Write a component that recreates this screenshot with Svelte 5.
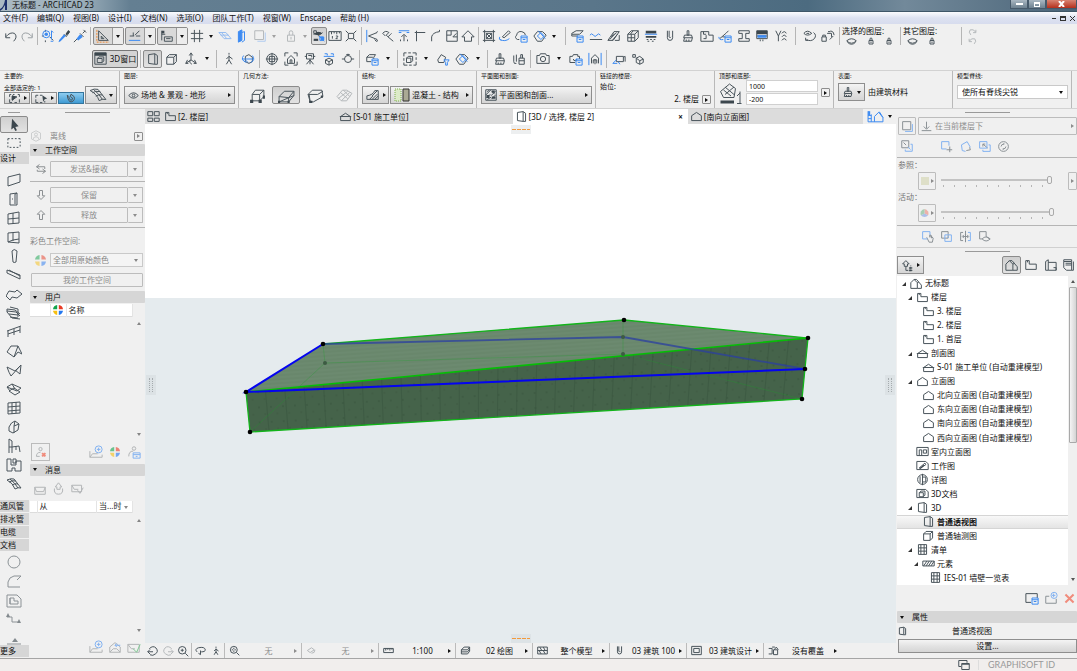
<script lang="ts">
  interface Glyph {
    k?: string; // dark strokes
    b?: string; // blue strokes
    f?: string; // dark fill
    bf?: string; // blue fill
    r?: string; // red strokes
    g?: string; // green strokes
    o?: string; // orange strokes
  }

  interface TreeRow {
    level: number;
    icon: string;
    label: string;
    open?: boolean;
    selected?: boolean;
  }

  // ── Icons, 16 × 16 grid ──────────────────────────────────────────────────────

  const HOUSE = 'M1 14V7l4-4 4 4v7zM5 3h3l6 7v4H9M9 7l2-1';
  const STORY = 'M2 3h4v4h8v6H2zM4 3v2';
  const SECTION = 'M2 8l6-4 6 4v5H2zM1 8h14';
  const ELEV = 'M2 13V7l6-4 6 4v6z';
  const PERSP = 'M3 3l7-1v12l-7-1zM10 2l3 2v10h-3';
  const AXO = 'M2 6h8v8H2zM2 6l3-3h8v8l-3 3M10 6l3-3';
  const MAIL = 'M2 6h12v8H2zM2 6l2 5h8l2-5';
  const BRUSH = 'M7 2h2v5H7zM4 7h8l1 3H3zM4 10l-1 4h9l1-4M6 12v2M9 12v2';
  const BLUEBOX = 'M8 8h7v7H8zM8 10h7M10 12h3';
  const GRID = 'M3 2h10v12H3zM6 2v12M10 2v12M3 6h10M3 10h10';
  const LOCK = 'M4 7h8v7H4zM6 7V4q0-2 2-2t2 2v3M8 9v3';

  const ICONS: Record<string, Glyph> = {
    undo: { k: 'M2 5v5h5M2 9q5-6 10-4 4 4-1 9' },
    redo: { k: 'M14 5v5H9M14 9Q9 3 4 5q-4 4 1 9' },
    find: { k: 'M1 8h2M5 1v2M5 13v2M10 9l4 4', b: 'M2 6a4 4 0 1 0 8 0 4 4 0 1 0-8 0M12 2v10M12 2l2 2M11 14h3', bf: 'M4 6a2 2 0 1 0 4 0 2 2 0 1 0-4 0' },
    dropper: { k: 'M8 6l3 3M10 7l3-4 1 1-3 4', b: 'M8 8l-6 6', f: 'M10 5l3-4 2 2-4 4z', bf: 'M8 6l2 2-6 6-2 1 1-3z' },
    syringe: { k: 'M5 11l-4 4M8 5l4 4M11 5l3-3M12 1l3 3', b: 'M10 7l-4 4', bf: 'M8 6l3 3-5 4-2-2z' },
    square: { k: 'M3 2v11h11zM6 8v3h3z', o: 'M1 1v14h14' },
    guide: { k: 'M2 8h5M8 7l5-5M9 8h5M6 4v4', b: 'M1 13h13' },
    snap: { k: 'M2 2v11M2 6h4M5 9h9v5H5zM7 11h5', f: 'M2 2h3v3H2z' },
    hash: { k: 'M5 1v14M11 1v14M1 5h14M1 11h14' },
    plane: { b: 'M1 4h8l6 7H7zM3 7h9M4 4l6 7' },
    wallblue: { b: 'M5 3l4-2v12l-4 2zM9 4l3-1v10l-3 2', bf: 'M5 3l4-2v12l-4 2z' },
    trace: { k: 'M2 2h10v10H2z', b: 'M5 14h9V4' },
    lock: { k: LOCK },
    group: { k: 'M2 2h3v3H2zM5 4h5M7 8l5-4M2 13h5M9 9l4 4', f: 'M1 6l6-3 5 2-5 2zM2 11h5v2H2z', b: 'M9 9h4v4H9zM8 8l6 6', bf: 'M10 9h4v4h-4z' },
    ruler: { k: 'M1 3h14v10H1zM4 3v3M7 3v2M10 3v3M13 3v2M5 8v3M9 8h2v1L9 11h2' },
    cross: { k: 'M5 5h6v6H5zM2 2l3 3M14 2l-3 3M2 14l3-3M14 14l-3-3' },
    trim: { k: 'M4 8l10-4M4 8l10 4M13 12q2 1 1 2t-3-2M13 4q2-2 1-1', b: 'M2 1v14' },
    wrench: { k: 'M2 5q3-4 7-1l-3 3 2 2 3-3 1-1M8 9l6 5M2 5l3 3' },
    adjust: { k: 'M8 14V7M5 9l3-3 3 3M4 14v-2M12 14v-2', b: 'M2 2h12M2 4h3M11 4h3' },
    corner: { k: 'M4 14V4h10M4 4V2M2 4h2' },
    fillet: { k: 'M3 14V9q1-5 9-6M12 3V1' },
    offset: { k: 'M2 2h12v12H2zM2 7h5V2M9 9h5M9 9l4-4' },
    home: { k: 'M1 9l7-7 7 7h-3v5H4V9z' },
    frame: { k: 'M3 1v14M13 1v14M1 3h14M1 13h14M5 5l6 6M11 5l-6 6M5 5h6v6H5z' },
    pencil: { k: 'M5 9l7-7 2 2-7 6z', b: 'M2 12q6 3 11-1M2 9q-2 3 2 4' },
    cloud: { k: 'M6 12H4q-4-2-1-5 1-5 6-4 4 1 4 4', b: BLUEBOX },
    morph: { k: 'M1 8l4-5h6l4 4-5 7H5z', b: 'M5 8l4-4 4 4-4 4zM6 2l8 9' },
    slab: { k: 'M2 5l5-3h8l-4 4H2zM2 8h7M2 6v2', b: BLUEBOX },
    waves: { k: 'M1 12h14', b: 'M1 7q2-3 4 0t4 0 4 0' },
    hatch: { k: 'M1 13h6l7-10H8zM3 12l8-8M6 13l6-7M5 9l3-4M9 13h5V7' },
    cubes: { k: 'M2 6l4-4h8v8l-4 4H2zM2 6h8v8M10 6l4-4M6 6v8M2 10h8M8 2L5 6' },
    layers: { f: 'M2 2h12v3H2zM2 8h12v2H2z', b: 'M1 6h14', k: 'M3 12h2M7 12h2M11 12h2M4 14h2M9 14h2' },
    hook: { k: 'M5 2v8q0 3 3 3t3-3V2M7 2v7q1 2 2 0' },
    brush: { k: BRUSH },
    plan: { k: 'M1 3h9v4h5v7H1zM4 3v3h3M7 7v4H4' },
    penbox: { k: 'M2 11l7-6 3-3M5 9h3', b: BLUEBOX + 'M1 9q0 4 5 3' },
    beam: { k: 'M2 2h12v3h-4v6h4v3H2v-3h4V5H2z' },
    table: { f: 'M2 2h12v4H2z', k: 'M2 2h12v9H2zM2 8h12M6 12v2M9 12v2', bf: 'M3 7h10v3H3z' },
    anchor: { k: 'M2 2l3 6 3-6M5 8v6M9 5q3-4 5 0M9 9q3-4 5 0M9 13q3-4 5 0' },
    eyecycle: { k: 'M1 5q4-5 9 0-5 4-9 0M4 5h3M4 12q5 3 9-1M12 4q4 3 1 7M3 10v3h3' },
    lockcycle: { k: 'M1 9h5v5H1zM2 9V7h3v2M7 5h5v4M10 12l4-4M11 2q4 1 4 5M8 3h3' },
    eye: { k: 'M1 8q7-8 14 0-7 8-14 0zM6 8a2 2 0 1 0 4 0 2 2 0 1 0-4 0' },
    lens: { k: 'M1 7q7-6 14 0-7 7-14 0M2 9q6 6 12 0' },
    box3d: { k: 'M1 1h14v14H1zM1 4h14M4 8h6v5H4zM4 8l2-2h6v5l-2 2', f: 'M1 1h14v3H1z' },
    persp: { k: PERSP },
    axo: { k: AXO },
    axes: { k: 'M8 2v7M8 9l-6 4M8 9l6 4M6 4l2-3 2 3M4 9l-2 4h3M12 9l2 4h-3M7 9q-2 3 2 5' },
    walk: { k: 'M8 1v2M8 4v5l3 5M8 9l-3 5M8 5L5 8M8 5l4 3' },
    orbit: { k: 'M5 5l4-2 4 3v5l-4 2-4-2z', b: 'M3 4q-4 5 3 8M8 12l-3-3M13 4q4 5-2 8M1 8h13' },
    target: { k: 'M2 8a6 6 0 1 0 12 0 6 6 0 1 0-12 0M1 8h14M8 1v14M5 5h6v6H5z' },
    fitview: { k: 'M1 5V1h4M11 1h4v4M1 11v4h4M11 15h4v-4M4 13V8l4-4 4 4v5zM7 13V9h2v4' },
    camera: { k: 'M4 2h8v6H4zM6 4h4v2M8 8v6M8 9l-4 5M8 9l4 5M2 5h2M12 5h2' },
    orbitbox: { k: 'M4 9l4-2 4 2v4l-4 2-4-2zM4 9l4 2 4-2M8 11v4', b: 'M2 5h12M3 2h3v2M10 2h3v2' },
    lookat: { k: 'M1 8h3M12 8h3M4 8a4 4 0 0 1 8 0M4 8a4 4 0 0 0 8 0M8 4v-2M6 3h4' },
    cut3d: { k: 'M2 6l3-3h7l-2 3v2M2 6v5h5M2 6h7', b: BLUEBOX },
    marquee3d: { k: 'M1 1h3M6 1h3M11 1h4v3M15 6v3M15 11v4h-3M10 15H7M5 15H1v-3M1 10V7M1 5V1M4 7h5v5H4zM4 7l2-2h5v5l-2 2' },
    filter3d: { k: 'M2 9l4-6 5 3-2 6H3z', b: 'M9 9h6l-2 3v3h-2v-3z' },
    brushes: { k: 'M8 7h6v7H8zM10 7V3h2v4M8 10h6M2 4v7M5 3v8M2 11q0 3 3 2' },
    photo: { k: 'M1 4h3l1-2h6l1 2h3v9H1zM5 8a3 3 0 1 0 6 0 3 3 0 1 0-6 0' },
    photoset: { k: 'M1 5h3l1-2h5v2h2v3M1 5v7h6M5 8a2 2 0 1 0 4 0', b: BLUEBOX },
    align: { k: 'M4 13V7l4-4 4 4v6M8 8v6M6 13V9h4v4', b: 'M1 1v14M15 1v14' },
    fly: { k: 'M5 5h8v6H5zM13 6l2-1v6', b: 'M1 13l4-4M1 13h5M7 11l2 3' },
    gems: { k: 'M2 3h3v3H2zM6 7l4-2 4 3v4l-4 2-4-2zM6 7l4 3 4-2M10 10v4' },
    // info box
    selrect: { k: 'M2 3h2M6 3h2M2 3v3M2 9v4h3M8 13h3M14 9v4M5 5v5l6-4zM12 3h2v3', f: 'M5 4l5 2-5 5z' },
    selarrow: { k: 'M1 4h3M6 4h3M1 4v3M1 9v4h3M6 13h3M12 11v2', f: 'M9 4l6 4-3 1-2 3z' },
    magnet: { k: 'M3 4q1 10 6 9 5-2 3-7l-4-3-1 3 3 2q0 3-2 3Q5 10 5 6z' },
    mesh: { k: 'M1 4q4-2 7-1l7 9q-3-1-6 1Q7 7 1 4M4 3q5 4 8 9M3 6q3-2 7-1M6 9q3-2 6-1' },
    geo1: { k: 'M3 7l3-4h8v6l-4 4H3zM3 7h7v6M10 7l4-4', f: 'M1 12h3v3H1zM9 12h3v3H9zM13 8h2v3h-2z' },
    geo2: { k: 'M1 9l5-5h9v4l-5 6H1zM1 9l9 1v4M10 10l5-6M1 14l14-6', f: 'M0 13h2v2H0zM9 13h2v2H9z' },
    geo3: { k: 'M1 7l4-4h9l1 6-9 5H3zM1 7h9l5-3M2 7l1 7', f: 'M2 13h3v2H2zM13 8h2v2h-2z' },
    geo4: { k: 'M1 9l5-6h4l5 3-5 7H5zM4 5l7 6M7 3l6 6M2 11l9-7M5 13l8-8' },
    wedge: { k: 'M1 13V9q7-1 9-6h4v10zM4 13l4-4M7 13l6-6M10 13l4-4M7 9l6-6' },
    textured: { k: 'M1 1h14v14H1zM3 4l3-3M1 8l7-7M9 3l4 4M8 9l6-6M2 12l5-5M9 13l5-5M3 14l5-3', f: 'M9 2h4v3H9zM2 8h4v4H2zM9 10h5v3H9z' },
    topbottom: { k: 'M1 7l6-5 4 3-1 6H3zM3 6l5 4M4 4l6 5M4 9l6-5M14 7v8M12 15h3M12 10l2-2', f: 'M1 13h9v2H1z' },
    // toolbox
    arrow: { f: 'M5 1l8 9-4 1 2 4-2 1-2-4-3 2z' },
    marquee: { k: 'M1 3h2M5 3h2M9 3h2M13 3h2v1M15 6v2M15 10v2M13 13h-2M9 13H7M5 13H3M1 13v-2M1 9V7M1 5V3' },
    wall: { k: 'M2 5l12-3v8L2 14z' },
    door: { k: 'M4 3l7-1v12H4zM6 8h1M11 2l-2 1v10' },
    window: { k: 'M2 4l11-2v11L2 14zM7 3v11M2 9l11-1' },
    cwindow: { k: 'M2 4l11-1v11L2 13zM7 4v8M7 11l6-1M2 13l5-2' },
    column: { k: 'M6 3q2-3 5 0l-1 11q-2 1-3 0z' },
    beamt: { k: 'M1 3l13 5v4L1 6zM3 3l11 6' },
    slabt: { k: 'M0 10l3-5 6 1 2-2 5 4-5 4-5-1-2 3z' },
    stair: { k: 'M1 4l8 1 5 4M1 6l9 1 4 4M3 9l9 1M4 12l8 1M1 4v3l5 6 8 1M4 2l8 2v8' },
    rail: { k: 'M1 7l14-5M2 7v6M8 5v6M14 3v6M2 10l12-4' },
    roof: { k: 'M1 9l4-6h7l4 8-4-2-4 5zM12 3L8 14' },
    shell: { k: 'M1 5q2 6 4 9l10-11-1 9-5-4M1 5l8 4 6-6' },
    skylight: { k: 'M1 6l5-3 9 4-4 3zM3 10l5-3 6 4-5 3zM1 6l3 4M6 3l3 5' },
    curtain: { k: 'M2 3l12-1v11L2 14zM6 3v11M10 2v11M2 7l12-1M2 11l12-1' },
    morpht: { k: 'M3 8q2-5 6-6l4 3-1 6-5 3-4-2zM9 2l-1 5v7M8 7l5-2' },
    chair: { k: 'M3 1l3 2v6H3zM3 9v6M6 9l7-1 1 6M6 9v6M10 8v4' },
    zone: { k: 'M1 2h4v6h5V4h5v10H9v-3H6v3H1zM7 2h3v4H7z' },
    circle: { k: 'M2 8a6 6 0 1 0 12 0 6 6 0 1 0-12 0' },
    polyline: { k: 'M2 14V9q1-5 6-6h7l-4 4M2 14h12' },
    drawing: { k: 'M1 3h10l4 4v8H1zM4 6h4v3h4v3H4zM4 6v6' },
    worksh: { k: 'M1 6h5v5h8', f: 'M0 6l2-4 2 4zM11 12l2-4 2 4z' },
    secline: { k: 'M1 14h14', f: 'M6 12l3-4 3 4z' },
    // palettes
    user: { k: 'M8 1L14 4v8l-6 3-6-3V4zM6 6a2 2 0 1 0 4 0 2 2 0 1 0-4 0M4 13q0-4 4-4t4 4' },
    swap: { k: 'M6 2L2 5l4 3M2 5h11v3M10 8l4 3-4 3M14 11H3V9' },
    down: { k: 'M6 2h4v7h3l-5 5-5-5h3z' },
    up: { k: 'M6 14h4V7h3L8 2 3 7h3z' },
    userx: { k: 'M6 5a2 2 0 1 0 4 0 2 2 0 1 0-4 0M3 14q0-5 5-5M3 14h4', r: 'M10 10l4 4M14 10l-4 4' },
    mailplus: { k: 'M1 7v7h14v-3M1 14l3-4h6', b: 'M7 5a4 4 0 1 0 8 0 4 4 0 1 0-8 0M11 3v4M9 5h4' },
    userbox: { k: 'M6 4a2 2 0 1 0 4 0 2 2 0 1 0-4 0M2 13q0-6 5-6', b: 'M7 9h8v6H7zM7 11h8M10 13h2' },
    mail: { k: MAIL },
    mailup: { k: 'M8 1L4 6h2v3h4V6h2zM3 8q-1 7 5 7t5-7' },
    mailok: { k: 'M1 4h12v8H1zM1 4l3 5h5M8 10l3 4 4-7' },
    mailopen: { k: 'M2 8l6-5 6 5v6H2zM2 14l4-4h4l4 4', b: 'M8 6h6M10 4L8 6l2 2' },
    mailcheck: { k: 'M1 5h13v9H1zM1 5l4 5h4', g: 'M7 10l4 4 4-9' },
    docs: { k: 'M2 2h10v10H2z', b: 'M5 14h9V5' },
    below: { k: 'M8 1v10M4 8l4 4 4-4M1 14h14' },
    switchref: { k: 'M2 2h8v8H2zM4 4l3 3', b: 'M6 12v2h8V6h-2M9 9l3 3' },
    moveref: { b: 'M8 11H2V2h9v5', k: 'M12 8v7M8 12h7' },
    rotref: { b: 'M3 6l7-4 4 7M3 6l1 7 4 1', k: 'M9 13l5-1-1-3' },
    offref: { b: 'M2 2h9v8H2zM6 12v2h9V6h-2', k: 'M6 5l6 5M6 5v3M6 5h3' },
    reset: { k: 'M2 8a6 6 0 1 0 12 0 6 6 0 1 0-12 0M5 8q0-3 4-3l-1-1M11 8q0 3-4 3l1 1' },
    hand: { b: 'M8 11H2V2h9v4', k: 'M7 9l3 6h4l1-5-2-2v2-3l-2-1v3-3' },
    overlap: { k: 'M2 2h8v8H2z', b: 'M6 6h8v8H6zM9 9h2' },
    split: { k: 'M5 3H2v10h3M8 1v14M5 8h6M6 6L4 8l2 2M10 6l2 2-2 2', b: 'M11 3h3v10h-3' },
    ghost: { k: 'M2 2h8v6M2 2v9h3M5 11q5-5 10 0-5 5-10 0M10 8l4 3' },
    chooser: { k: 'M2 6l4-4 4 4H8v3H4V6zM6 9v5h3M12 8v1M11 14h3M11 11h3', f: 'M10 10h3v2h-3zM10 13h3v2h-3z' },
    views: { k: 'M3 14V4l3-2v12zM6 5h9v9H6M12 11h3v3' },
    pubs: { k: 'M2 4V2h9v2M2 4h9v10H5l-3-3zM4 6h7M4 8h7M13 4v10h-2' },
    house: { k: HOUSE },
    story: { k: STORY },
    section: { k: SECTION },
    elev: { k: ELEV },
    interior: { k: 'M1 3h14v10H1zM4 13V6h3v7M9 6h4v4H9z' },
    worksheet: { k: 'M1 3h11l3 3v7H1zM4 11l7-6 1 2-6 4z', f: 'M4 12l5-5 1 1-4 4z' },
    detail: { k: 'M2 8a6 6 0 1 0 12 0 6 6 0 1 0-12 0M8 1v14M5 4v8M8 5h4v6H8' },
    doc3d: { k: 'M1 3h11l3 3v7H1zM4 7h5v5H4zM4 7l2-2h5v5l-2 2' },
    grid: { k: GRID },
    hatchbar: { k: 'M1 5h14v6H1zM2 11l4-6M5 11l4-6M8 11l4-6M11 11l4-6' },
    newview: { k: 'M7 13H1V3h13v5', b: BLUEBOX },
    addfolder: { k: 'M2 6v8h12V9M2 6h4', b: 'M8 5a3 3 0 1 0 7 0 3 3 0 1 0-7 0M11 3v4M9 5h4' },
    del: { r: 'M3 3l10 10M13 3L3 13' },
    fourgrid: { k: 'M1 2h6v5H1zM9 2h6v5H9zM1 10h6v4H1zM9 10h6v4H9z' },
    bluehouse: { b: 'M1 3v10h14V9l-4-5-4 4v5M1 7h3M1 10h3M4 6v7M11 4h1l3 5', bf: 'M1 3h2v4H1z' },
    zoomin: { k: 'M2 7a5 5 0 1 0 10 0 5 5 0 1 0-10 0M11 11l4 4M5 7h4M7 5v4' },
    zoomprev: { k: 'M3 5q5-5 9-1 4 5-1 8-3 3-7 1M1 9h7M4 6L1 9l3 3' },
    zoomnext: { k: 'M13 5q-5-5-9-1-4 5 1 8 3 3 7 1M15 9H8M12 6l3 3-3 3' },
    orbitq: { k: 'M3 10q-4-4 2-6 9-2 10 3 0 3-6 3M8 8v6M8 14l-3-2' },
    fit: { k: 'M2 7a5 5 0 1 0 10 0 5 5 0 1 0-10 0M11 11l4 4M7 4v2M7 8v2M4 7h2M8 7h2' },
    tilt: { k: 'M2 8l6-4 4 3-6 4zM8 12q5 0 5-5' },
    scale: { k: 'M1 5h14v6H1zM4 5v3M7 5v2M10 5v3M13 5v2' },
    stack: { k: 'M2 7l4-4h8l-3 4zM2 10h9l3-4M2 13h9l3-4M2 7v6M14 3v6' },
    model: { k: 'M1 3h14v10H1zM1 8h14M4 3l3 5M9 3l3 5M3 8l3 5M9 8l3 5' },
    rect2: { k: 'M1 2h14v12H1zM4 5h8v6H4z' },
    override: { k: 'M1 5h5v8H1M8 7h6v7H8zM9 7l3-4 3 4M6 3h4' },
    windows: { k: 'M1 2h11v3M1 2v8h3M5 6h10v8H5zM5 7h10' },
  };

  // ── Toolbars, "|" is a divider and "v" a drop-down arrow ────────────────────

  const row1a = ['undo', 'redo', '|', 'find', 'dropper', 'syringe', '|'];
  const row1b = ['hash', 'v', 'plane', 'wallblue'];
  const row1c = ['ruler', 'cross', '|', 'trim', 'wrench', 'adjust', 'corner', 'fillet', 'offset', 'home', '|', 'frame', 'pencil', 'cloud'];
  const row1d = ['slab', 'waves', 'hatch', 'cubes', 'layers', 'hook', 'brush', 'plan', 'penbox', 'beam', 'table', 'anchor'];
  const row2 = [
    'axo', 'axes', 'v', '|', 'walk', 'orbit', '|', 'target', 'fitview', 'camera', 'orbitbox', 'lookat', '|',
    'cut3d', 'v', '|', 'marquee3d', 'v', 'filter3d', 'morph', 'v', '|', 'brush', 'brushes', '|',
    'photo', 'v', 'photoset', 'align', '|', 'fly', 'gems',
  ];
  const paleTools = ['redo', 'plane'];

  const menus = ['文件(F)', '编辑(Q)', '视图(B)', '设计(I)', '文档(N)', '选项(O)', '团队工作(T)', '视窗(W)', 'Enscape', '帮助 (H)'];

  const designTools = [
    'wall', 'door', 'window', 'cwindow', 'column', 'beamt', 'slabt', 'stair', 'rail', 'roof', 'shell',
    'skylight', 'curtain', 'morpht', 'chair', 'zone', 'mesh',
  ];
  const toolGroups = ['通风管', '排水管', '电缆', '文档'];
  const docTools = ['circle', 'polyline', 'drawing', 'worksh', 'secline'];

  const tabs = [
    { icon: 'story', label: '[2. 楼层]' },
    { icon: 'section', label: '[S-01 施工单位]' },
    { icon: 'persp', label: '[3D / 选择, 楼层 2]', active: true },
    { icon: 'elev', label: '[南向立面图]' },
  ];

  const tree: TreeRow[] = [
    { level: 0, icon: 'house', label: '无标题', open: true },
    { level: 1, icon: 'story', label: '楼层', open: true },
    { level: 2, icon: 'story', label: '3. 楼层' },
    { level: 2, icon: 'story', label: '2. 楼层' },
    { level: 2, icon: 'story', label: '1. 首层' },
    { level: 1, icon: 'section', label: '剖面图', open: true },
    { level: 2, icon: 'section', label: 'S-01 施工单位 (自动重建模型)' },
    { level: 1, icon: 'elev', label: '立面图', open: true },
    { level: 2, icon: 'elev', label: '北向立面图 (自动重建模型)' },
    { level: 2, icon: 'elev', label: '东向立面图 (自动重建模型)' },
    { level: 2, icon: 'elev', label: '南向立面图 (自动重建模型)' },
    { level: 2, icon: 'elev', label: '西向立面图 (自动重建模型)' },
    { level: 1, icon: 'interior', label: '室内立面图' },
    { level: 1, icon: 'worksheet', label: '工作图' },
    { level: 1, icon: 'detail', label: '详图' },
    { level: 1, icon: 'doc3d', label: '3D文档' },
    { level: 1, icon: 'persp', label: '3D', open: true },
    { level: 2, icon: 'persp', label: '普通透视图', selected: true },
    { level: 2, icon: 'axo', label: '普通轴测图' },
    { level: 1, icon: 'grid', label: '清单', open: true },
    { level: 2, icon: 'hatchbar', label: '元素', open: true },
    { level: 3, icon: 'grid', label: 'IES-01 墙壁一览表' },
  ];

  const quick = [
    { icon: 'fit', label: '无', off: true },
    { icon: 'tilt', label: '无', off: true, dim: true },
    { icon: 'scale', label: '1:100' },
    { icon: 'stack', label: '02 绘图' },
    { icon: 'model', label: '整个模型' },
    { icon: 'hook', label: '03 建筑 100' },
    { icon: 'rect2', label: '03 建筑设计' },
    { icon: 'override', label: '没有覆盖' },
  ];

  // ── Model view ───────────────────────────────────────────────────────────────

  const seams = Array.from({ length: 28 }, (_, i) => {
    const t = (i + 1) / 29;
    return { x1: 101 + 562 * t, y1: 268 - 54 * t, x2: 105 + 552 * t, y2: 308 - 33 * t };
  });
  const nodes = [[101, 268], [178, 220], [479, 196], [663, 214], [660, 245], [657, 275], [105, 308]];
  const hidden = [[180, 239], [478, 213], [478, 230]];

  let topLevel = $state('1000');
  let bottomLevel = $state('-200');
  let reference = $state(100);
  let active = $state(100);
</script>

{#snippet icon(name: string, size = 14)}
  {@const g = ICONS[name]}
  <svg class="icon" width={size} height={size} viewBox="0 0 16 16" aria-hidden="true">
    {#if g.k}<path class="ink" d={g.k} />{/if}
    {#if g.f}<path class="solid" d={g.f} />{/if}
    {#if g.b}<path class="blue" d={g.b} />{/if}
    {#if g.bf}<path class="blue-solid" d={g.bf} />{/if}
    {#if g.r}<path class="red" d={g.r} />{/if}
    {#if g.g}<path class="green" d={g.g} />{/if}
    {#if g.o}<path class="orange" d={g.o} />{/if}
  </svg>
{/snippet}

{#snippet wheel(size = 11)}
  <svg class="icon" width={size} height={size} viewBox="0 0 12 12" aria-hidden="true">
    <path fill="#12a44c" d="M5 5H0a6 6 0 0 1 5-5z" />
    <path fill="#e83a24" d="M7 5h5a6 6 0 0 0-5-5z" />
    <path fill="#f6bf12" d="M5 7H0a6 6 0 0 0 5 5z" />
    <path fill="#2478f0" d="M7 7h5a6 6 0 0 1-5 5z" />
  </svg>
{/snippet}

{#snippet tools(items: string[])}
  {#each items as item}
    {#if item === '|'}
      <span class="divider"></span>
    {:else if item === 'v'}
      <button class="drop" aria-label="更多"><i class="tri"></i></button>
    {:else}
      <button class="tool" class:pale={paleTools.includes(item)} aria-label={item}>{@render icon(item)}</button>
    {/if}
  {/each}
{/snippet}

{#snippet combo(name: string)}
  <div class="combo">
    <button class="combo-main" aria-label={name}>{@render icon(name)}</button>
    <button class="combo-drop" aria-label="更多"><i class="tri"></i></button>
  </div>
{/snippet}

{#snippet scroller()}
  <div class="scroller"><i class="tri tri--up"></i><i class="tri"></i></div>
{/snippet}

<div class="app">
  <header class="titlebar">
    <svg class="logo" width="9" height="12" viewBox="0 0 9 12" aria-hidden="true">
      <path d="M0 9Q4 7 5 0h2v10H5V5Q3 9 0 11z" fill="#1c2f6c" />
    </svg>
    <span class="title">无标题 - ARCHICAD 23</span>
    <div class="winbtns">
      <button aria-label="最小化"><i class="min"></i></button>
      <button aria-label="还原"><i class="max"></i></button>
      <button class="close" aria-label="关闭">
        <svg width="7" height="6" viewBox="0 0 7 6" aria-hidden="true"><path d="M1 0l5 6M6 0L1 6" stroke="#fff" stroke-width="2" /></svg>
      </button>
    </div>
  </header>

  <nav class="menubar">
    {#each menus as m}<button>{m}</button>{/each}
    <div class="docbtns">
      <button aria-label="最小化文档"><i class="min"></i></button>
      <button aria-label="还原文档"><i class="max"></i></button>
      <button aria-label="关闭文档">
        <svg width="5" height="5" viewBox="0 0 5 5" aria-hidden="true"><path d="M0 0l5 5M5 0L0 5" stroke="#333" /></svg>
      </button>
    </div>
  </nav>

  <div class="toolbars">
    <div class="bar bar--top">
      {@render tools(row1a)}
      {@render combo('square')}
      {@render combo('guide')}
      {@render combo('snap')}
      {@render tools(row1b)}
      <div class="set faded">{@render tools(['trace', 'v'])}</div>
      <div class="set faded">{@render tools(['lock', 'v'])}</div>
      <button class="tool pressed" aria-label="group">{@render icon('group')}</button>
      {@render tools(row1c)}
      <div class="set">{@render tools(['morph', 'v'])}</div>
      <div class="set">{@render tools(['|'])}</div>
      <div class="spread">{@render tools(row1d)}</div>
      <div class="set">{@render tools(['|'])}</div>
      <div class="set wide">{@render tools(['eyecycle', 'lockcycle', '|'])}</div>
      <div class="layerset">
        <span>选择的图层:</span>
        <div>
          <button aria-label="显示">{@render icon('lens', 11)}</button>
          <button aria-label="锁定">{@render icon('lock', 8)}</button>
          <button aria-label="解锁">{@render icon('lock', 8)}</button>
        </div>
      </div>
      <span class="divider"></span>
      <div class="layerset">
        <span>其它图层:</span>
        <div>
          <button aria-label="显示其它">{@render icon('lens', 11)}</button>
          <button aria-label="锁定其它">{@render icon('lock', 8)}</button>
        </div>
      </div>
      <span class="divider"></span>
      <div class="redoset faded">
        <button aria-label="重做图层">{@render icon('redo', 9)}</button>
        <button aria-label="撤销图层">{@render icon('undo', 9)}</button>
      </div>
    </div>

    <div class="bar bar--view">
      <button class="window3d">{@render icon('box3d', 13)}3D窗口</button>
      <span class="divider"></span>
      <button class="tool pressed" aria-label="persp">{@render icon('persp')}</button>
      {@render tools(row2)}
    </div>
  </div>

  <div class="infobox">
    <section>
      <h2>主要的:</h2>
      <div class="body">
        <div class="stacked">
          <span class="tiny">全部选定的: 1</span>
          <div class="body">
            <button class="btn btn--low" aria-label="选择">{@render icon('selrect', 13)}<i class="tri tri--right"></i></button>
            <button class="btn btn--low" aria-label="选框">{@render icon('selarrow', 13)}<i class="tri tri--right"></i></button>
            <button class="btn btn--low btn--on" aria-label="吸引">{@render icon('magnet', 12)}</button>
          </div>
        </div>
        <button class="btn grow" aria-label="网面">{@render icon('mesh', 18)}<i class="tri"></i></button>
      </div>
    </section>
    <section>
      <h2>图层:</h2>
      <div class="body">
        <button class="btn grow">{@render icon('eye', 11)}<span class="fill">场地 & 景观 - 地形</span><i class="tri tri--right"></i></button>
      </div>
    </section>
    <section>
      <h2>几何方法:</h2>
      <div class="body">
        <button class="geo" aria-label="方法一">{@render icon('geo1', 17)}</button>
        <button class="geo pressed" aria-label="方法二">{@render icon('geo2', 17)}</button>
        <button class="geo" aria-label="方法三">{@render icon('geo3', 17)}</button>
        <button class="geo faded" aria-label="方法四">{@render icon('geo4', 17)}</button>
      </div>
    </section>
    <section>
      <h2>结构:</h2>
      <div class="body">
        <button class="btn btn--sq" aria-label="结构类型">{@render icon('wedge')}<i class="tri tri--right"></i></button>
        <button class="btn grow">
          <svg class="icon" width="16" height="14" viewBox="0 0 16 14" aria-hidden="true">
            <path fill="#dcebc8" stroke="#7fb04a" stroke-dasharray="1 1" d="M1 1h6v12H1z" />
            <path fill="#aaa994" stroke="#333" d="M9 1h6v12H9z" />
          </svg>
          <span class="fill">混凝土 - 结构</span><i class="tri tri--right"></i>
        </button>
      </div>
    </section>
    <section>
      <h2>平面图和剖面:</h2>
      <div class="body">
        <button class="btn grow">{@render icon('textured', 12)}<span class="fill">平面图和剖面...</span><i class="tri tri--right"></i></button>
      </div>
    </section>
    <section>
      <h2>链接的楼层:</h2>
      <span class="small">始位:</span>
      <div class="body body--end">2. 楼层<button class="mini" aria-label="楼层"><i class="tri tri--right"></i></button></div>
    </section>
    <section>
      <h2>顶部和底部:</h2>
      <div class="body body--mid">
        {@render icon('topbottom', 24)}
        <div class="levels">
          <input aria-label="顶部" bind:value={topLevel} />
          <input aria-label="底部" bind:value={bottomLevel} />
        </div>
        <button class="mini" aria-label="标高"><i class="tri tri--right"></i></button>
      </div>
    </section>
    <section>
      <h2>表面:</h2>
      <div class="body body--mid">
        <button class="btn btn--sq" aria-label="表面">{@render icon('brush', 12)}<i class="tri"></i></button>
        <span>由建筑材料</span>
      </div>
    </section>
    <section>
      <h2>模型脊线:</h2>
      <div class="body body--mid">
        <div class="select grow">
          <select aria-label="模型脊线"><option>使所有脊线尖锐</option></select>
          <i class="tri"></i>
        </div>
      </div>
    </section>
  </div>

  <main class="work">
    <aside class="toolbox">
      <i class="handle handle--short"></i>
      <button class="tb pressed" aria-label="箭头">{@render icon('arrow', 13)}</button>
      <button class="tb" aria-label="选取框">{@render icon('marquee')}</button>
      <h3>设计</h3>
      <div class="designs">
        {#each designTools as t}<button class="tb" aria-label={t}>{@render icon(t, 16)}</button>{/each}
      </div>
      {#each toolGroups as g}<h3>{g}</h3>{/each}
      <div class="docs">
        {#each docTools as t}<button class="tb" aria-label={t}>{@render icon(t, 16)}</button>{/each}
      </div>
      <h3>更多</h3>
    </aside>

    <aside class="team">
      <i class="handle"></i>
      <div class="offline"><span class="faded">{@render icon('user', 12)}</span>离线<button class="mini" aria-label="选项"><i class="tri tri--right"></i></button></div>
      <h4><i class="tri"></i>工作空间</h4>
      <div class="rows">
        <div class="row"><span>{@render icon('swap', 12)}</span><button class="flat">发送&接收</button><button class="flat flat--drop" aria-label="发送选项"><i class="tri"></i></button></div>
      </div>
      <div class="rows">
        <div class="row"><span>{@render icon('down', 12)}</span><button class="flat">保留</button><button class="flat flat--drop" aria-label="保留选项"><i class="tri"></i></button></div>
        <div class="row"><span>{@render icon('up', 12)}</span><button class="flat">释放</button><button class="flat flat--drop" aria-label="释放选项"><i class="tri"></i></button></div>
      </div>
      <label class="cap" for="ws-color">彩色工作空间:</label>
      <div class="row row--color">
        <span class="pale">{@render wheel()}</span>
        <div class="select grow">
          <select id="ws-color" disabled><option>全部用原始颜色</option></select>
          <i class="tri"></i>
        </div>
      </div>
      <button class="flat flat--own">我的工作空间</button>
      <h4><i class="tri"></i>用户</h4>
      <div class="listing">
        <table>
          <thead><tr><th class="c20"></th><th class="c16">{@render wheel(10)}</th><th>名称</th></tr></thead>
        </table>
        {@render scroller()}
      </div>
      <div class="acts">
        <button class="boxed" aria-label="移除用户">{@render icon('userx', 13)}</button>
        <span class="fill"></span>
        <button aria-label="新消息">{@render icon('mailplus')}</button>
        <button aria-label="颜色">{@render wheel(10)}</button>
        <button aria-label="用户详情">{@render icon('userbox')}</button>
      </div>
      <h4><i class="tri"></i>消息</h4>
      <div class="acts acts--left">
        <button aria-label="消息">{@render icon('mail')}</button>
        <button aria-label="发送">{@render icon('mailup', 13)}</button>
        <button aria-label="已完成">{@render icon('mailok', 13)}</button>
      </div>
      <div class="listing">
        <table>
          <thead><tr><th class="c8"></th><th>从</th><th class="c36">当...时 <i class="tri"></i></th></tr></thead>
        </table>
        {@render scroller()}
      </div>
      <div class="acts acts--foot">
        <span class="fill"></span>
        <button aria-label="新建">{@render icon('mailplus')}</button>
        <button aria-label="回复">{@render icon('mailopen')}</button>
        <button aria-label="完成">{@render icon('mailcheck')}</button>
      </div>
    </aside>

    <div class="center">
      <div class="tabs">
        <button class="tabgrid" aria-label="标签总览">{@render icon('fourgrid', 13)}</button>
        {#each tabs as t}
          <button class="tab" class:tab--active={t.active}>
            {@render icon(t.icon, 13)}<span class="fill">{t.label}</span>
            {#if t.active}<b>×</b>{/if}
          </button>
        {/each}
        <button class="tabmore" aria-label="视图">{@render icon('bluehouse', 17)}<i class="tri"></i></button>
      </div>

      <div class="viewport">
        <svg class="model" viewBox="0 0 751 519" preserveAspectRatio="xMidYMin slice" aria-label="3D">
          <defs>
            <pattern id="soil" width="12" height="15" patternUnits="userSpaceOnUse" patternTransform="rotate(-3)">
              <circle cx="3" cy="4" r="0.7" fill="#33503a" />
              <circle cx="9" cy="11" r="0.7" fill="#3b5540" />
            </pattern>
            <pattern id="turf" width="40" height="4" patternUnits="userSpaceOnUse" patternTransform="rotate(-4)">
              <path d="M0 2h40" stroke="#769279" stroke-width="1" />
            </pattern>
          </defs>
          <rect width="751" height="174" fill="#fff" />
          <path d="M101 268L663 214 657 275 105 308z" fill="#45634a" />
          <path d="M101 268L663 214 657 275 105 308z" fill="url(#soil)" />
          {#each seams as s}
            <line x1={s.x1} y1={s.y1} x2={s.x2} y2={s.y2} stroke="#3b5741" opacity="0.6" />
          {/each}
          <path d="M101 268L178 220 479 196 663 214z" fill="#69876c" />
          <path d="M101 268L178 220 479 196 663 214z" fill="url(#turf)" opacity="0.5" />
          <path d="M105 308L180 239 478 230 657 275M180 239l-2-19M478 230V196" fill="none" stroke="#1d9e2a" opacity="0.3" />
          <path d="M178 220L479 196 663 214 657 275 105 308 101 268" fill="none" stroke="#12b41a" stroke-width="1.3" />
          <path d="M101 268L663 214" stroke="#06bd06" stroke-width="1.6" />
          <path d="M178 220L478 213 660 245" fill="none" stroke="#2b3fa0" stroke-width="1.8" opacity="0.75" />
          <path d="M178 220L101 268 660 245" fill="none" stroke="#0404f0" stroke-width="2" />
          {#each hidden as [x, y]}<circle cx={x} cy={y} r="2" fill="#3d5a43" />{/each}
          {#each nodes as [x, y]}<circle cx={x} cy={y} r="2.3" fill="#000" />{/each}
        </svg>
        <i class="dash dash--top"></i>
        <i class="dash dash--bottom"></i>
        <i class="grip grip--left"></i>
        <i class="grip grip--right"></i>
      </div>

      <div class="quick">
        <div class="zooms">
          <button aria-label="上一个">{@render icon('zoomprev', 12)}</button>
          <button class="faded" aria-label="下一个">{@render icon('zoomnext', 12)}</button>
          <button aria-label="放大">{@render icon('zoomin', 12)}</button>
        </div>
        <div class="zooms zooms--nav">
          <button aria-label="环绕">{@render icon('orbitq', 11)}</button>
          <button aria-label="漫游">{@render icon('walk', 10)}</button>
        </div>
        {#each quick as q}
          <button class="qcell" class:off={q.off}>
            <span class:faded={q.dim}>{@render icon(q.icon, 11)}</span><span class="fill">{q.label}</span><i class="tri tri--right"></i>
          </button>
        {/each}
      </div>
    </div>

    <aside class="side">
      <i class="handle"></i>
      <div class="traceref">
        <button class="flat flat--icon" aria-label="描绘">{@render icon('docs', 13)}</button>
        <button class="flat flat--wide">{@render icon('below', 11)}<span class="fill">在当前楼层下</span><i class="tri tri--right"></i></button>
      </div>
      <div class="refs">
        <button aria-label="切换">{@render icon('switchref')}</button>
        <span></span>
        {#each ['moveref', 'rotref', 'offref', 'reset'] as r}<button aria-label={r}>{@render icon(r, 13)}</button>{/each}
      </div>
      <div class="sliders">
        <label for="ref-range">参照：</label>
        <div class="slide">
          <button class="flat" aria-label="参照颜色"><i class="swatch"></i><i class="tri tri--right"></i></button>
          <div class="track"><input id="ref-range" type="range" bind:value={reference} /><i class="ticks"></i></div>
          <button class="flat flat--cut" aria-label="更多参照"><i class="tri tri--right"></i></button>
        </div>
        <label for="act-range">活动：</label>
        <div class="slide">
          <button class="flat" aria-label="活动颜色">
            <svg class="icon" width="9" height="9" viewBox="0 0 10 10" aria-hidden="true">
              <path fill="#ec8a7c" d="M5 5V0a5 5 0 0 1 4 7z" /><path fill="#7f9fe6" d="M5 5l4 2a5 5 0 0 1-8 0z" /><path fill="#79b98d" d="M5 5L1 7a5 5 0 0 1 4-7z" />
            </svg>
            <i class="tri tri--right"></i>
          </button>
          <div class="track"><input id="act-range" type="range" bind:value={active} /><i class="ticks"></i></div>
        </div>
      </div>
      <div class="refs refs--low">
        <span></span>
        {#each ['hand', 'overlap', 'split', 'ghost'] as r}<button aria-label={r}>{@render icon(r, 13)}</button>{/each}
      </div>
      <i class="handle"></i>
      <div class="navtop">
        <button class="btn btn--sq" aria-label="项目选择">{@render icon('chooser', 13)}<i class="tri tri--right"></i></button>
        <span class="fill"></span>
        <button class="nav pressed" aria-label="项目树">{@render icon('house')}</button>
        <button class="nav" aria-label="视图映射">{@render icon('story')}</button>
        <button class="nav" aria-label="图册">{@render icon('views')}</button>
        <button class="nav" aria-label="发布器">{@render icon('pubs')}</button>
      </div>
      <div class="navigator">
        <ul>
          {#each tree as row}
            <li class="lv{row.level}" class:selected={row.selected}>
              <i class="caret" class:caret--open={row.open}></i>
              {@render icon(row.icon, 13)}<a href="#{row.icon}">{row.label}</a>
            </li>
          {/each}
        </ul>
        <div class="bigscroll"><i class="tri tri--up"></i><span class="thumb"></span><i class="tri"></i></div>
      </div>
      <div class="acts acts--nav">
        <span class="fill"></span>
        <button class="vivid" aria-label="新建视图">{@render icon('newview')}</button>
        <button aria-label="新建文件夹">{@render icon('addfolder')}</button>
        <button aria-label="删除">{@render icon('del', 13)}</button>
      </div>
      <h4><i class="tri"></i>属性</h4>
      <div class="prop">{@render icon('persp', 10)}<span>普通透视图</span></div>
      <button class="btn settings">设置...</button>
    </aside>
  </main>

  <footer class="status">
    {@render icon('windows', 12)}<span>GRAPHISOFT ID</span>
  </footer>
</div>

<style>
  :global(body) {
    margin: 0;
    overflow: hidden;
  }

  .app {
    height: 100vh;
    display: flex;
    flex-direction: column;
    overflow: hidden;
    background: #f0f0f0;
    color: #111;
    font: 8px/10px "Noto Sans", "Noto Sans CJK SC", sans-serif;
  }

  .app *,
  .app *::before {
    box-sizing: border-box;
  }

  button,
  input,
  select {
    font: inherit;
    color: inherit;
    margin: 0;
    padding: 0;
    border: 0;
    background: none;
    white-space: nowrap;
  }

  button {
    display: flex;
    align-items: center;
    justify-content: center;
    flex-shrink: 0;
  }

  h2, h3, h4, ul {
    margin: 0;
    padding: 0;
    font-size: 8px;
    font-weight: 400;
    list-style: none;
  }

  .icon { display: block; flex-shrink: 0; }
  .icon path { stroke-width: 1; vector-effect: non-scaling-stroke; }
  .ink, .blue, .red, .green, .orange { fill: none; }
  .ink { stroke: #4a555c; }
  .solid { fill: #3c474e; }
  .blue { stroke: #3d8bf2; }
  .blue-solid { fill: #3d8bf2; }
  .icon .red { stroke: #f04a30; stroke-width: 2; }
  .green { stroke: #35b055; }
  .orange { stroke: #ef8a35; stroke-dasharray: 2 1; }

  .faded { opacity: 0.35; }
  .pale { opacity: 0.5; }
  .fill { flex: 1; min-width: 0; }
  .grow { flex: 1; }

  .tri {
    display: block;
    flex-shrink: 0;
    width: 0;
    border: 2px solid transparent;
    border-top: 3px solid currentColor;
    border-bottom-width: 0;
  }

  .tri--up {
    border-top-width: 0;
    border-bottom: 3px solid currentColor;
  }

  .tri--right {
    border: 2px solid transparent;
    border-left: 3px solid currentColor;
    border-right-width: 0;
  }

  .pressed {
    background: linear-gradient(#cfcfcf, #e2e2e2);
    border: 1px solid #8b8b8b;
    border-radius: 2px;
  }

  /* window chrome */

  .titlebar {
    display: flex;
    height: 12px;
    background: linear-gradient(90deg, #aab9c3 0, #9db0bc 80px, #647f92 130px, #5a768a 55%, #4c6b80 75%, #72899a 84%, #4a6478 100%);
    border-bottom: 1px solid #3f5768;
  }

  .title {
    flex: 1;
    padding-left: 3px;
    white-space: nowrap;
  }

  .winbtns { display: flex; height: 9px; }

  .winbtns button {
    width: 18px;
    background: linear-gradient(#a9b7c2, #6d8190);
    border: 1px solid #46596a;
    border-top: 0;
    color: #fff;
  }

  .winbtns .close { width: 31px; background: linear-gradient(#d98472, #b5301c); }

  .min { width: 7px; height: 2px; background: currentColor; }
  .max { width: 6px; height: 5px; border: 1px solid currentColor; border-top-width: 2px; }

  .menubar {
    display: flex;
    align-items: center;
    height: 12px;
    padding-left: 3px;
    gap: 9px;
    background: linear-gradient(#fbfcfe, #dde2f1 50%, #d7dcee);
  }

  .docbtns { display: flex; gap: 4px; margin-left: auto; padding-right: 2px; color: #333; }
  .docbtns .min { width: 4px; height: 1px; }

  /* toolbars */

  .toolbars { padding-bottom: 1px; }
  .bar { display: flex; align-items: center; }
  .bar--top { height: 24px; padding-left: 3px; }
  .bar--view { height: 21px; padding-left: 92px; }
  .bar .tool { width: 16px; height: 18px; }
  .bar--view .tool { width: 19px; }
  .wide .tool { width: 18px; }

  .divider {
    flex: 0 0 1px;
    height: 18px;
    margin: 0 2px;
    background: #b5b5b5;
  }

  .drop { width: 12px; height: 18px; }
  .bar--view .drop { width: 14px; }
  .set { display: flex; align-items: center; padding-left: 3px; }
  .spread { display: flex; justify-content: space-around; width: 222px; }

  .combo {
    display: flex;
    width: 31px;
    height: 18px;
    margin-right: 1px;
    border: 1px solid #8b8b8b;
    border-radius: 2px;
    background: #d9d9d9;
  }

  .combo-main { flex: 1; border-right: 1px solid #9a9a9a; }
  .combo-drop { width: 10px; background: #ececec; }

  .layerset { width: 56px; white-space: nowrap; }
  .layerset div { display: flex; gap: 10px; padding-left: 4px; }
  .redoset { padding-left: 4px; }

  .window3d {
    gap: 3px;
    width: 46px;
    height: 18px;
    border: 1px solid #777;
    border-radius: 2px;
    background: #d4d4d4;
  }

  /* info box */

  .infobox {
    display: grid;
    grid-template-columns: 120px repeat(8, 119px);
    height: 39px;
    overflow: hidden;
    border-top: 1px solid #d2d2d2;
    border-bottom: 1px solid #d2d2d2;
  }

  .infobox section {
    display: flex;
    flex-direction: column;
    min-width: 0;
    padding: 1px 3px 4px 4px;
    border-right: 1px solid #b9b9b9;
    overflow: hidden;
  }

  .infobox h2, .tiny { font-size: 6px; line-height: 8px; white-space: nowrap; }
  .small { font-size: 7px; line-height: 14px; }
  .body { display: flex; align-items: flex-end; gap: 1px; flex: 1; }
  .body--end { justify-content: flex-end; gap: 3px; }
  .body--mid { align-items: center; gap: 3px; }
  .stacked { display: flex; flex-direction: column; }

  .btn {
    gap: 2px;
    height: 18px;
    padding: 0 3px;
    border: 1px solid #8e8e8e;
    background: linear-gradient(#f4f4f4, #e3e3e3 50%, #d5d5d5);
    text-align: left;
  }

  .btn--sq { width: 27px; gap: 3px; }
  .btn--low { width: 26px; height: 12px; gap: 3px; }
  .btn--on { background: linear-gradient(#8ecdf0, #3e9ad3); border-color: #33759e; }
  .infobox .btn.grow { flex-shrink: 1; }
  .geo { width: 28px; height: 18px; }

  .mini {
    width: 9px;
    height: 9px;
    border: 1px solid #8e8e8e;
    border-radius: 1px;
  }

  .levels { display: flex; flex-direction: column; gap: 1px; flex: 1; min-width: 0; }
  .levels input { width: 100%; height: 12px; padding-left: 2px; background: #fff; border: 1px solid #d0d0d0; font-size: 7px; }

  .select {
    display: flex;
    align-items: center;
    height: 14px;
    padding: 0 4px;
    background: #fff;
    border: 1px solid #c9c9c9;
  }

  .select select { flex: 1; min-width: 0; appearance: none; opacity: 1; }

  /* work area */

  .work { display: flex; flex: 1; min-height: 0; border-bottom: 1px solid #a5a5a5; }

  .handle {
    flex: 0 0 1px;
    width: 45px;
    margin: 3px auto;
    background: #9a9a9a;
  }

  .handle--short { width: 12px; margin-left: 8px; }

  .toolbox { display: flex; flex-direction: column; width: 29px; }
  .toolbox h3 { flex-shrink: 0; height: 12px; margin-bottom: 1px; line-height: 12px; background: #d6d6d6; white-space: nowrap; overflow: hidden; }
  .tb { width: 28px; height: 19px; }
  .tb.pressed { height: 17px; }
  .designs { display: flex; flex-direction: column; padding: 5px 0 7px; }
  .docs { flex: 1; min-height: 0; overflow: hidden; opacity: 0.6; }

  .team { display: flex; flex-direction: column; width: 116px; padding-left: 1px; color: #858585; }
  .team .ink { stroke: #8c9093; }

  .team h4, .side h4 {
    display: flex;
    align-items: center;
    gap: 8px;
    height: 12px;
    padding-left: 3px;
    background: #d6d6d6;
    border-radius: 1px;
    color: #111;
  }

  .offline { display: flex; align-items: center; gap: 8px; height: 16px; margin-top: 12px; }
  .offline .mini { margin-left: auto; margin-right: 2px; }
  .rows { padding: 5px 2px 4px 0; border-bottom: 1px solid #b5b5b5; display: flex; flex-direction: column; gap: 4px; }
  .row { display: flex; align-items: center; }
  .row > span { width: 20px; padding-left: 5px; flex-shrink: 0; }

  .flat {
    height: 16px;
    border: 1px solid #bcbcbc;
    border-radius: 1px;
    color: #8d8d8d;
  }

  .row .flat { flex: 1; }
  .row .flat--drop { flex: 0 0 15px; border-left-width: 0; }
  .cap { padding: 8px 0 7px; }
  .row--color { margin-right: 2px; }
  .row--color .select { min-width: 0; background: #f4f4f4; padding-left: 2px; }
  .row--color select { width: 100%; }
  .flat--own { height: 14px; margin: 6px 2px 4px 1px; }

  .listing { display: flex; flex: 1; min-height: 0; padding-top: 1px; }
  .listing table { flex: 1; align-self: flex-start; border-collapse: collapse; table-layout: fixed; color: #222; background: #fff; border-bottom: 1px solid #dcdcdc; }
  .listing tr { height: 12px; }
  .listing th { padding: 0 0 0 2px; text-align: left; font-weight: 400; border-right: 1px solid #e4e4e4; white-space: nowrap; }
  .listing th .tri { display: inline-block; vertical-align: middle; color: #888; }
  .c20 { width: 20px; }
  .c16 { width: 16px; }
  .c8 { width: 7px; }
  .c36 { width: 36px; }
  .scroller { display: flex; flex-direction: column; justify-content: space-between; align-items: center; width: 12px; padding: 18px 0 4px; }

  .acts { display: flex; align-items: center; height: 24px; padding-right: 2px; }
  .acts button { width: 19px; height: 18px; opacity: 0.6; }
  .acts .boxed { border: 1px solid #999; margin-left: 1px; }
  .acts--left { padding: 2px 0 0; }
  .acts--foot { height: 22px; }
  .acts .vivid { opacity: 1; }
  .acts--nav { height: 26px; padding: 0; margin-right: -2px; }

  .center { display: flex; flex-direction: column; flex: 1; min-width: 0; }
  .tabs { display: flex; height: 15px; background: #dcdcdc; }
  .tabgrid { width: 17px; }
  .tab { flex: 1; gap: 1px; padding: 0 5px 0 2px; text-align: left; }
  .tab--active { background: #fff; }
  .tab b { line-height: 8px; }
  .tabmore { width: 33px; gap: 4px; background: #f0f0f0; }

  .viewport { position: relative; flex: 1; min-height: 0; background: #e5ebee; overflow: hidden; }
  .model { display: block; width: 100%; height: 100%; }
  .dash { position: absolute; left: 50%; width: 20px; height: 9px; margin-left: -10px; background: #edeff0; }
  .dash::before { content: ''; display: block; height: 1px; margin: 4px 1px 0; background: repeating-linear-gradient(90deg, #f39a3c 0 4px, transparent 4px 5px); }
  .dash--top { top: 1px; }
  .dash--bottom { bottom: 0; background: #dde3e6; }
  .grip { position: absolute; top: 251px; width: 10px; height: 20px; background: #dce2e5; }
  .grip::before { content: ''; display: block; width: 4px; height: 14px; margin: 3px; border: dotted #a5abae; border-width: 0 1px; }
  .grip--left { left: 1px; }
  .grip--right { right: 1px; }

  .quick { display: flex; height: 15px; }
  .zooms { display: flex; width: 47px; justify-content: space-around; border-right: 1px solid #bbb; }
  .zooms--nav { width: 33px; }
  .qcell { width: 77px; padding: 0 4px; border-right: 1px solid #bbb; }
  .qcell:last-child { border-right: 0; }
  .qcell.off .fill, .qcell.off .tri { color: #8d8d8d; }
  .qcell .fill { padding-left: 3px; }

  .side { display: flex; flex-direction: column; width: 181px; padding-left: 1px; overflow: hidden; }
  .side .handle { margin-left: 68px; }
  .side .flat .icon { opacity: 0.6; }
  .traceref { display: flex; gap: 2px; padding: 1px 0 0 1px; }
  .flat--icon { width: 18px; height: 18px; }
  .flat--wide { flex: 1; height: 18px; padding: 0 2px; gap: 3px; text-align: left; }
  .refs { display: flex; gap: 2px; height: 22px; padding-left: 1px; opacity: 0.6; }
  .refs button { width: 17px; }
  .refs span { width: 19px; }
  .refs--low { border-bottom: 1px solid #bbb; }
  .sliders { border: solid #b5b5b5; border-width: 1px 0; padding: 1px 0 2px 1px; color: #777; height: 69px; }
  .sliders label { display: block; line-height: 12px; }
  .slide { display: flex; align-items: center; height: 20px; padding-left: 20px; gap: 5px; }
  .slide .flat { width: 18px; height: 18px; gap: 2px; }
  .slide .flat--cut { width: 9px; margin-left: 11px; }
  .swatch { width: 8px; height: 8px; background: #dedfc8; }
  .track { width: 113px; }

  .track input { display: block; appearance: none; width: 100%; height: 9px; }
  .track input::-webkit-slider-runnable-track { height: 2px; background: #c3c3c3; }
  .track input::-webkit-slider-thumb { appearance: none; width: 5px; height: 8px; margin-top: -3px; border: 1px solid #aaa; border-radius: 2px; background: #f0f0f0; }

  .ticks {
    display: block;
    height: 2px;
    margin: 1px 2px 0;
    background: repeating-linear-gradient(90deg, #b5b5b5 0 1px, transparent 1px 11px);
  }

  .navtop { display: flex; align-items: center; height: 20px; margin-right: -1px; }
  .nav { width: 19px; height: 18px; }

  .navigator { display: flex; flex: 1; min-height: 0; margin-top: 1px; background: #fff; }
  .navigator ul { display: grid; grid-auto-rows: 1fr; flex: 1; min-width: 0; overflow: hidden; }
  .navigator li { display: flex; align-items: center; min-height: 0; gap: 2px; padding-left: 4px; white-space: nowrap; }
  .navigator li.lv1 { padding-left: 10px; }
  .navigator li.lv2 { padding-left: 16px; }
  .navigator li.lv3 { padding-left: 23px; }
  .navigator a { color: inherit; text-decoration: none; }
  .navigator li.selected { font-weight: 700; background: linear-gradient(#f8f8f8, #e4e4e4); border: solid #d5d5d5; border-width: 1px 0; }
  .caret { width: 7px; height: 5px; flex-shrink: 0; }
  .caret--open { border: solid transparent; border-width: 5px 0 0 5px; width: 0; height: 0; margin-right: 2px; position: relative; }
  .caret--open::before { content: ''; position: absolute; right: 0; top: -4px; border: solid transparent; border-width: 0 0 4px 4px; border-bottom-color: #333; }
  .bigscroll { display: flex; flex-direction: column; align-items: center; justify-content: space-between; width: 9px; padding: 4px 0; background: #f0f0f0; color: #555; }
  .thumb { width: 8px; height: 156px; margin-bottom: auto; margin-top: 4px; border: 1px solid #a9a9a9; border-radius: 1px; background: linear-gradient(90deg, #f4f4f4, #d4d4d4); }

  .prop { display: flex; align-items: center; height: 16px; }
  .prop .icon { width: 11px; }
  .prop span { margin-left: 44px; }
  .settings { height: 14px; margin: 0 0 5px 1px; }

  .status {
    display: flex;
    align-items: center;
    justify-content: flex-end;
    gap: 8px;
    height: 12px;
    padding-right: 22px;
    background: #f1eeed;
    color: #999;
    font-family: Lato, sans-serif;
    font-size: 9px;
  }

  .status span { padding-left: 9px; border-left: 1px solid #ddd; white-space: nowrap; }
</style>
